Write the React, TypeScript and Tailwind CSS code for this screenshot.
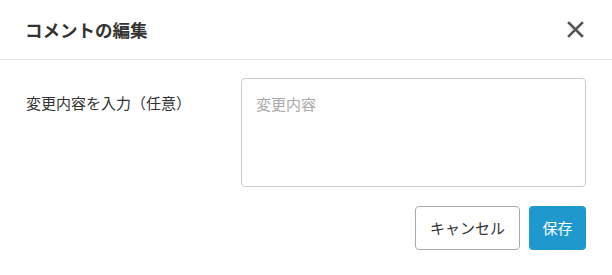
export default function App() {
  return (
    <div
      className="w-[612px] h-[275px] bg-white text-[#333]"
      style={{ fontFamily: '"Noto Sans CJK JP", "Noto Sans", sans-serif' }}
    >
      {/* Header */}
      <div className="h-[60px] pl-[25px] pr-[28px] flex items-center justify-between border-b border-[#e6e6e6]">
        <h2 className="text-[17.5px] font-bold leading-none text-[#333]">コメントの編集</h2>
        <button className="w-[18px] h-[18px] flex items-center justify-center text-[#555]">
          <svg width="17" height="17" viewBox="0 0 17 17" fill="none" stroke="currentColor" strokeWidth="2.6" strokeLinecap="square">
            <path d="M2 2L15 15M15 2L2 15" />
          </svg>
        </button>
      </div>

      {/* Body */}
      <div className="px-[26px] pt-[18px]">
        <div className="flex">
          <label className="w-[215px] pt-[14px] text-[15px] leading-[22px] text-[#333]">
            変更内容を入力（任意）
          </label>
          <textarea
            placeholder="変更内容"
            className="w-[345px] h-[109px] resize-none rounded-[4px] border border-[#cccccc] px-[14px] py-[14px] text-[15px] leading-[22px] text-[#333] placeholder:text-[#aaaaaa] outline-none"
          />
        </div>

        {/* Footer */}
        <div className="flex justify-end gap-[9px] mt-[19px]">
          <button className="h-[44px] w-[105px] rounded-[4px] border border-[#aaaaaa] bg-white text-[15px] text-[#333]">
            キャンセル
          </button>
          <button className="h-[44px] w-[57px] rounded-[4px] bg-[#1f98cd] text-[15px] text-white">
            保存
          </button>
        </div>
      </div>
    </div>
  );
}
